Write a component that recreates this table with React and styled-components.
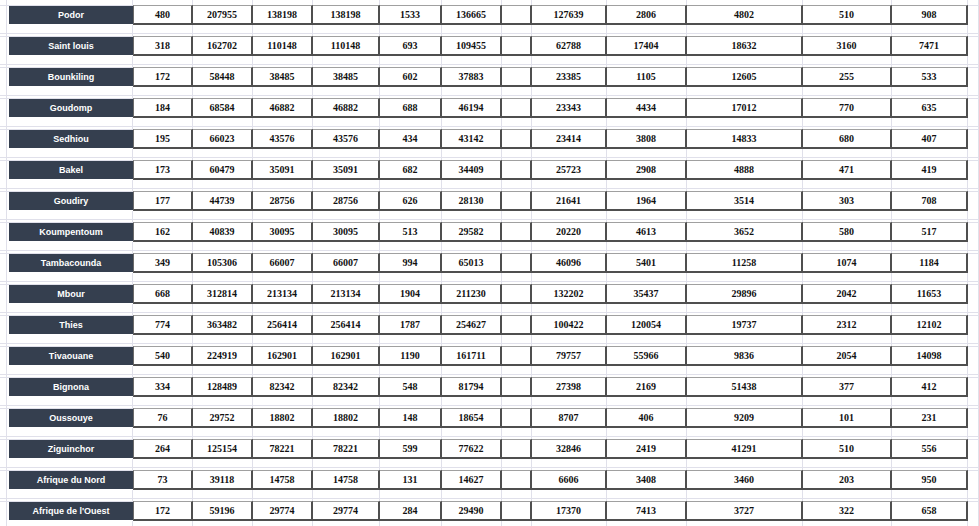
import React from 'react'
import styled, { createGlobalStyle } from 'styled-components'

const GRID = '#e0e0ea'
const DARK = '#4f4f4f'
const NAVY = '#353f4f'

const COLS = [7, 126, 60, 60, 60, 67, 62, 60, 30, 75, 80, 116, 89, 76]

const rows = [
  ['Podor', 480, 207955, 138198, 138198, 1533, 136665, '', 127639, 2806, 4802, 510, 908],
  ['Saint louis', 318, 162702, 110148, 110148, 693, 109455, '', 62788, 17404, 18632, 3160, 7471],
  ['Bounkiling', 172, 58448, 38485, 38485, 602, 37883, '', 23385, 1105, 12605, 255, 533],
  ['Goudomp', 184, 68584, 46882, 46882, 688, 46194, '', 23343, 4434, 17012, 770, 635],
  ['Sedhiou', 195, 66023, 43576, 43576, 434, 43142, '', 23414, 3808, 14833, 680, 407],
  ['Bakel', 173, 60479, 35091, 35091, 682, 34409, '', 25723, 2908, 4888, 471, 419],
  ['Goudiry', 177, 44739, 28756, 28756, 626, 28130, '', 21641, 1964, 3514, 303, 708],
  ['Koumpentoum', 162, 40839, 30095, 30095, 513, 29582, '', 20220, 4613, 3652, 580, 517],
  ['Tambacounda', 349, 105306, 66007, 66007, 994, 65013, '', 46096, 5401, 11258, 1074, 1184],
  ['Mbour', 668, 312814, 213134, 213134, 1904, 211230, '', 132202, 35437, 29896, 2042, 11653],
  ['Thies', 774, 363482, 256414, 256414, 1787, 254627, '', 100422, 120054, 19737, 2312, 12102],
  ['Tivaouane', 540, 224919, 162901, 162901, 1190, 161711, '', 79757, 55966, 9836, 2054, 14098],
  ['Bignona', 334, 128489, 82342, 82342, 548, 81794, '', 27398, 2169, 51438, 377, 412],
  ['Oussouye', 76, 29752, 18802, 18802, 148, 18654, '', 8707, 406, 9209, 101, 231],
  ['Ziguinchor', 264, 125154, 78221, 78221, 599, 77622, '', 32846, 2419, 41291, 510, 556],
  ['Afrique du Nord', 73, 39118, 14758, 14758, 131, 14627, '', 6606, 3408, 3460, 203, 950],
  ["Afrique de l'Ouest", 172, 59196, 29774, 29774, 284, 29490, '', 17370, 7413, 3727, 322, 658],
]

const GlobalStyle = createGlobalStyle`
  html, body {
    margin: 0;
    padding: 0;
    background: #fff;
    overflow: hidden;
  }
`

const Sheet = styled.div`
  display: grid;
  grid-template-columns: ${COLS.map((w) => `${w}px`).join(' ')} 1fr;
  grid-template-rows: 5px repeat(${rows.length}, 20px 11px);
  width: 979px;
  height: 526px;
  overflow: hidden;
`

const Blank = styled.div`
  box-sizing: border-box;
  border-right: 1px solid ${GRID};
  ${(p) => p.$gap && `
    background: linear-gradient(${GRID}, ${GRID}) 0 8px / 100% 1px no-repeat;
  `}
  ${(p) => p.$top && `border-top: 1px solid ${GRID};`}
`

const LabelCell = styled.div`
  box-sizing: border-box;
  border-top: 1px solid ${GRID};
  padding: 0 0 1px 2px;
  display: flex;
`

const Label = styled.div`
  flex: 1;
  background: ${NAVY};
  color: #fff;
  font-family: "Liberation Sans", Arial, sans-serif;
  font-weight: bold;
  font-size: 9px;
  display: flex;
  align-items: center;
  justify-content: center;
  white-space: nowrap;
`

const Value = styled.div`
  box-sizing: border-box;
  background: #fff;
  border-top: 1px solid #a0a0a0;
  border-bottom: 2px solid ${DARK};
  border-right: 2px solid ${DARK};
  ${(p) => p.$first && `border-left: 1px solid #6a6a6a;`}
  font-family: "Liberation Serif", "Times New Roman", serif;
  font-weight: bold;
  font-size: 10px;
  color: #111;
  display: flex;
  align-items: center;
  justify-content: center;
`

const blankRow = (key, props) =>
  Array.from({ length: COLS.length + 1 }, (_, i) => <Blank key={`${key}-${i}`} {...props} />)

export default function App() {
  return (
    <>
      <GlobalStyle />
      <Sheet>
        {blankRow('head', {})}
        {rows.map(([name, ...values], r) => (
          <React.Fragment key={name}>
            <Blank $top />
            <LabelCell>
              <Label>{name}</Label>
            </LabelCell>
            {values.map((v, i) => (
              <Value key={i} $first={i === 0}>{v}</Value>
            ))}
            <Blank $top />
            {blankRow(`gap-${r}`, { $gap: true })}
          </React.Fragment>
        ))}
      </Sheet>
    </>
  )
}
